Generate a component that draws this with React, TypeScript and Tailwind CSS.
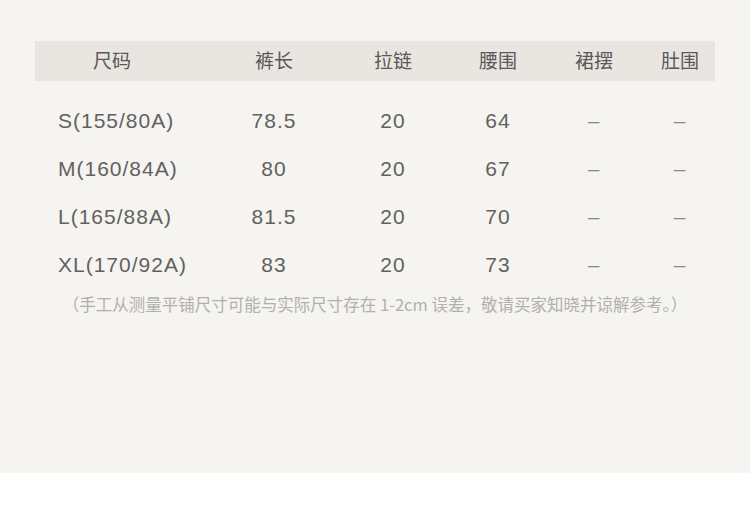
const headers = ["尺码", "裤长", "拉链", "腰围", "裙摆", "肚围"];

const rows = [
  ["S(155/80A)", "78.5", "20", "64", "–", "–"],
  ["M(160/84A)", "80", "20", "67", "–", "–"],
  ["L(165/88A)", "81.5", "20", "70", "–", "–"],
  ["XL(170/92A)", "83", "20", "73", "–", "–"],
];

const cols = "grid grid-cols-[154px_170px_68px_142px_50px_96px]";

export default function App() {
  return (
    <div className="h-[510px] w-[750px] bg-white">
      <div className="h-[473px] bg-[#f5f4f0] px-[35px] pt-[41px] font-['Liberation_Sans','Noto_Sans_CJK_SC',sans-serif]">
        <div className={`${cols} h-[40px] items-center bg-[#e9e5e0] pb-[1px] font-['Noto_Sans_CJK_SC',sans-serif] text-[19px] text-[#5a5858]`}>
          {headers.map((h, i) => (
            <div key={h} className={`text-center ${i === 5 ? "pl-[26px]" : ""}`}>
              {h}
            </div>
          ))}
        </div>

        <div className="mt-[16px]">
          {rows.map((r) => (
            <div
              key={r[0]}
              className={`${cols} h-[48px] items-center text-[21px] tracking-[1px] text-[#636160]`}
            >
              <div className="pl-[23px]">{r[0]}</div>
              {r.slice(1).map((v, i) => (
                <div
                  key={i}
                  className={`text-center ${v === "–" ? "text-[#8a8886]" : ""} ${i === 4 ? "pl-[26px]" : ""}`}
                >
                  {v}
                </div>
              ))}
            </div>
          ))}
        </div>

        <p className="mt-[3px] text-center font-['Noto_Sans_CJK_SC',sans-serif] text-[16.5px] text-[#b2b0ac]">
          （手工从测量平铺尺寸可能与实际尺寸存在 1-2cm 误差，敬请买家知晓并谅解参考。）
        </p>
      </div>
    </div>
  );
}
